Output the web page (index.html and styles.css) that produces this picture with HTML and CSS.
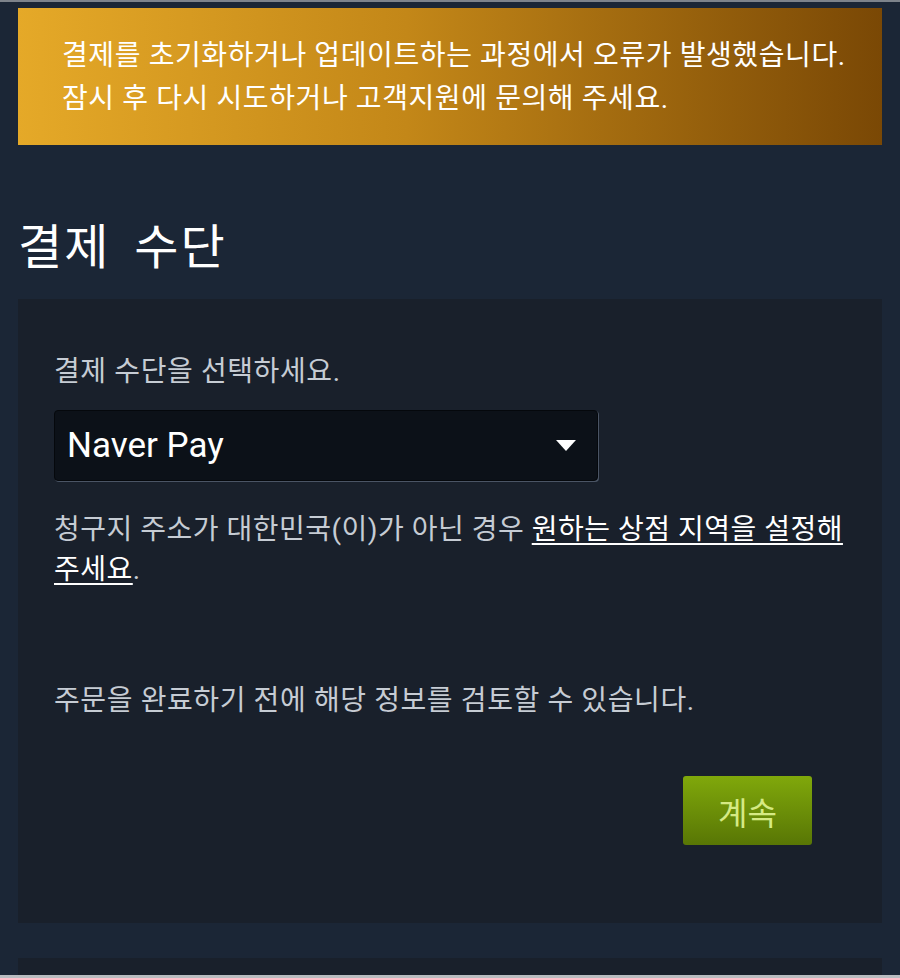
FILE: index.html
```html
<!DOCTYPE html>
<html lang="ko">
<head>
  <meta charset="UTF-8" />
  <meta name="viewport" content="width=device-width, initial-scale=1.0" />
  <title>결제 수단</title>
  <link rel="stylesheet" href="styles.css">
</head>
<body>
  <div class="page">
    <div class="error-banner">
      결제를 초기화하거나 업데이트하는 과정에서 오류가 발생했습니다.<br>
      잠시 후 다시 시도하거나 고객지원에 문의해 주세요.
    </div>

    <h1 class="section-title">결제 수단</h1>

    <div class="panel">
      <label class="field-label" for="payment_method">결제 수단을 선택하세요.</label>
      <div class="select-box" id="payment_method">
        <span>Naver Pay</span>
        <span class="caret"></span>
      </div>

      <p class="note">청구지 주소가 대한민국(이)가 아닌 경우 <a href="#">원하는 상점 지역을 설정해 주세요</a>.</p>

      <p class="review">주문을 완료하기 전에 해당 정보를 검토할 수 있습니다.</p>

      <div class="actions">
        <button type="button" class="button">계속</button>
      </div>
    </div>

    <div class="panel next-panel">
      <h2 class="next-title">결제 세부 정보</h2>
    </div>
  </div>
</body>
</html>
```

FILE: styles.css
```css
body {
  margin: 0;
  padding: 0;
  background-color: #1b2636;
  font-family: Roboto, "Noto Sans CJK KR", sans-serif;
  color: #c6ccd4;
}
.page {
  height: 973px;
  overflow: hidden;
  border-top: 2px solid #7d838b;
  border-bottom: 3px solid #b9bcc0;
  padding: 0 18px;
}
.error-banner {
  margin-top: 6px;
  padding: 26px 16px 25px 44px;
  background: linear-gradient(to right, #e5a928, #c38718 45%, #7a4805);
  color: #fff;
  font-size: 28px;
  letter-spacing: 0.6px;
  line-height: 43px;
  white-space: nowrap;
}
.section-title {
  margin: 75px 0 24px;
  font-size: 48px;
  font-weight: 400;
  line-height: 55px;
  letter-spacing: 2px;
  word-spacing: 10px;
  color: #fff;
}
.panel {
  background-color: #19202b;
  padding: 36px 28px 36px 36px;
}
.field-label {
  display: block;
  margin-top: 17px;
  font-size: 28px;
  letter-spacing: 0.6px;
  line-height: 40px;
}
.select-box {
  margin-top: 18px;
  width: 544px;
  height: 71px;
  display: flex;
  align-items: center;
  justify-content: space-between;
  padding: 0 21px 0 12px;
  box-sizing: border-box;
  background-color: #0c1118;
  border: 1px solid #05080c;
  border-radius: 4px;
  box-shadow: 1px 1px 0 0 #4a5464;
  color: #fff;
  font-size: 35px;
}
.caret {
  width: 0;
  height: 0;
  border-left: 10px solid transparent;
  border-right: 10px solid transparent;
  border-top: 11px solid #fff;
}
.note {
  margin: 29px 0 0;
  font-size: 28px;
  letter-spacing: 0.5px;
  line-height: 40px;
  word-break: keep-all;
}
.note a {
  color: #fff;
  text-decoration: underline;
  text-underline-offset: 4px;
}
.review {
  margin: 91px 0 0;
  font-size: 28px;
  letter-spacing: 0.6px;
  line-height: 40px;
}
.actions {
  display: flex;
  justify-content: flex-end;
  margin: 55px 42px 42px 0;
}
.button {
  width: 129px;
  height: 69px;
  border: none;
  border-radius: 3px;
  background: linear-gradient(to bottom, #80a80b, #587605);
  color: #d5ea84;
  font-family: inherit;
  font-size: 32px;
  cursor: pointer;
}
.next-panel {
  margin-top: 35px;
  padding: 12px 32px;
}
.next-title {
  margin: 0;
  font-size: 28px;
  font-weight: 400;
  color: #fff;
}
```
